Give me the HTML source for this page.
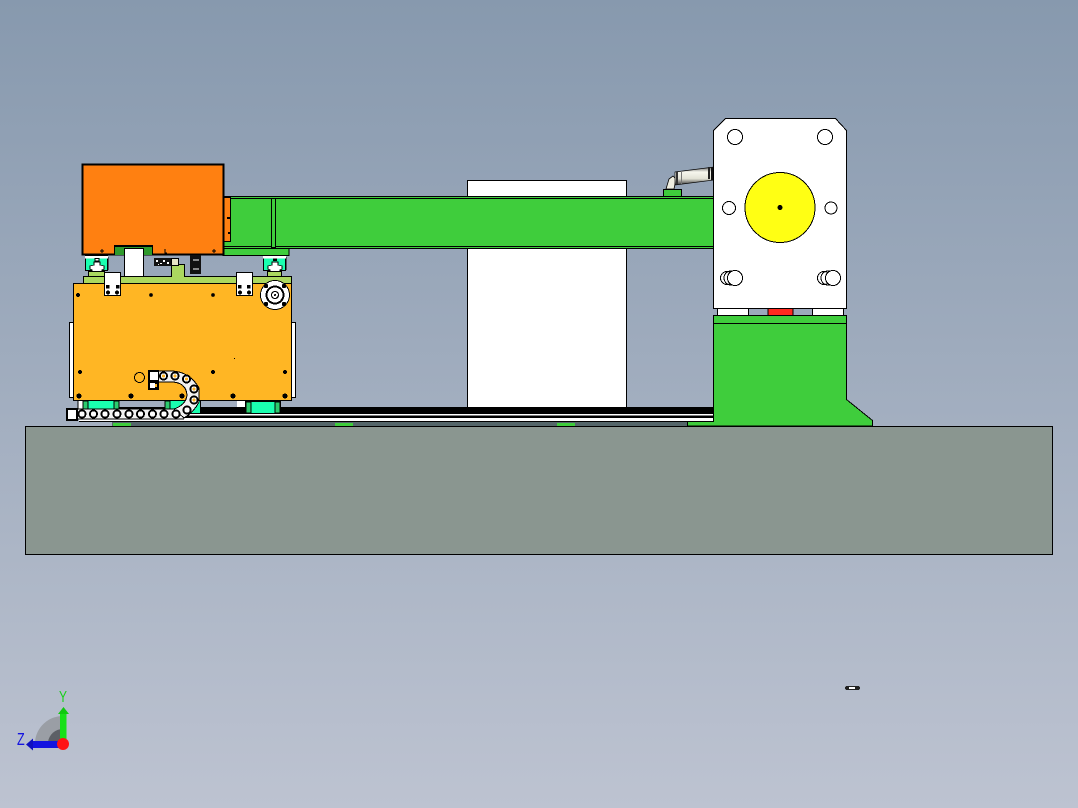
<!DOCTYPE html>
<html>
<head>
<meta charset="utf-8">
<style>
html,body{margin:0;padding:0;width:1078px;height:808px;overflow:hidden;background:linear-gradient(#8799ae,#bdc3d1);}
svg{display:block;position:absolute;left:0;top:0;}
text{font-family:"Liberation Sans",sans-serif;}
</style>
</head>
<body>
<svg width="1078" height="808" viewBox="0 0 1078 808" xmlns="http://www.w3.org/2000/svg" shape-rendering="crispEdges">
<!-- ground -->
<rect x="25.5" y="426.5" width="1027" height="128" fill="#8a9690" stroke="#000"/>
<!-- tower -->
<rect x="467.5" y="180.5" width="159" height="228" fill="#fff" stroke="#000"/>
<!-- rail -->
<rect x="80" y="407" width="634" height="7" fill="#000"/>
<rect x="80" y="414" width="634" height="1.5" fill="#fff"/>
<rect x="80" y="415.5" width="634" height="2.5" fill="#000"/>
<rect x="79" y="418" width="635" height="3.5" fill="#fff"/>
<rect x="79" y="421" width="635" height="1" fill="#000"/>
<rect x="112" y="422" width="600" height="4" fill="#55666a"/>
<rect x="113" y="423" width="18" height="3" fill="#3fcd3c"/>
<rect x="335" y="423" width="18" height="3" fill="#3fcd3c"/>
<rect x="557" y="423" width="18" height="3" fill="#3fcd3c"/>
<!-- beam -->
<rect x="223" y="196.5" width="491" height="52" fill="#3fcd3c" stroke="#000"/>
<rect x="223" y="198" width="491" height="1" fill="#000"/>
<rect x="223" y="246" width="491" height="1" fill="#000"/>
<rect x="271.5" y="198.5" width="4" height="49" fill="#3fcd3c" stroke="#000"/>
<rect x="223" y="248.5" width="66" height="7" fill="#3fcd3c" stroke="#000"/>
<rect x="223.5" y="197.5" width="7" height="44" fill="#ff8011" stroke="#000"/>
<rect x="227" y="217" width="3" height="2" fill="#000"/>
<rect x="228" y="232" width="3" height="2" fill="#000"/>
<!-- motor mount tab and cylinder -->
<rect x="663.5" y="189.5" width="18" height="7" fill="#3fcd3c" stroke="#000"/>
<defs>
<linearGradient id="cyl" x1="0" y1="0" x2="0" y2="1">
<stop offset="0" stop-color="#666"/><stop offset=".28" stop-color="#f6f6ee"/><stop offset=".65" stop-color="#e2e2d6"/><stop offset="1" stop-color="#333"/>
</linearGradient>
</defs>
<path d="M666 189l3-10 4-3 3 3-2 10z" fill="#efeee0" stroke="#000" stroke-width=".8" shape-rendering="auto"/>
<path d="M675 172l39-5v13l-39 5z" fill="url(#cyl)" stroke="#000" stroke-width=".7" shape-rendering="auto"/>
<rect x="708" y="167" width="2" height="12" fill="#222"/>
<rect x="711" y="167" width="3" height="13" fill="#111"/>
<rect x="676" y="172" width="2" height="12" fill="#333"/>
<rect x="681" y="171" width="1" height="13" fill="#777"/>
<!-- plate -->
<path d="M725.5 118.5H835.5L846.5 130.5V308.5H713.5V130.5Z" fill="#fff" stroke="#000"/>
<circle cx="735" cy="137" r="7.5" fill="none" stroke="#000"/>
<circle cx="825" cy="137" r="7.5" fill="none" stroke="#000"/>
<circle cx="729" cy="208" r="6.5" fill="none" stroke="#000"/>
<circle cx="831" cy="208" r="6" fill="none" stroke="#000"/>
<circle cx="727" cy="278" r="6.5" fill="none" stroke="#000"/>
<circle cx="731" cy="278" r="7" fill="none" stroke="#000"/>
<circle cx="735" cy="278" r="7.5" fill="#fff" stroke="#000"/>
<circle cx="824" cy="278" r="6.5" fill="none" stroke="#000"/>
<circle cx="828" cy="278" r="7" fill="none" stroke="#000"/>
<circle cx="833" cy="278" r="7.5" fill="#fff" stroke="#000"/>
<circle cx="780" cy="207.5" r="35" fill="#ffff14" stroke="#000"/>
<circle cx="780" cy="207.5" r="2.5" fill="#000"/>
<!-- under plate -->
<rect x="717.5" y="308.5" width="31" height="7" fill="#fff" stroke="#000"/>
<rect x="768" y="308.5" width="25" height="7" fill="#ff2a20" stroke="#000"/>
<rect x="812.5" y="308.5" width="31" height="7" fill="#fff" stroke="#000"/>
<!-- base -->
<path d="M713.5 315.5H846.5V399.5L872.5 420.5V426H687.5V421.5H713.5Z" fill="#3fcd3c" stroke="#000"/>
<rect x="714" y="323" width="133" height="1" fill="#000"/>
<!-- side rails -->
<rect x="69.5" y="322.5" width="4" height="75" fill="#fff" stroke="#000"/>
<rect x="291.5" y="322.5" width="4" height="75" fill="#fff" stroke="#000"/>
<!-- bearing blocks -->
<g>
<rect x="85.5" y="255.5" width="22" height="15" fill="#1affb0" stroke="#000"/>
<rect x="107" y="257" width="1.5" height="13" fill="#000"/>
<rect x="85" y="256" width="23" height="2.5" fill="#fff"/>
<path d="M90 266l4-1v-3h6v3l4 1v3l-2 1v2h-10v-2l-2-1z" fill="#fff" stroke="#000" stroke-width=".8"/>
<rect x="95" y="258.5" width="4" height="2.5" fill="#fff" stroke="#000" stroke-width=".6"/>
</g>
<g transform="translate(178,0)">
<rect x="85.5" y="255.5" width="22" height="15" fill="#1affb0" stroke="#000"/>
<rect x="107" y="257" width="1.5" height="13" fill="#000"/>
<rect x="85" y="256" width="23" height="2.5" fill="#fff"/>
<path d="M90 266l4-1v-3h6v3l4 1v3l-2 1v2h-10v-2l-2-1z" fill="#fff" stroke="#000" stroke-width=".8"/>
<rect x="95" y="258.5" width="4" height="2.5" fill="#000"/>
</g>
<!-- green plate -->
<path d="M83.5 276.5H171.5V264.5H184.5V276.5H291.5V283.5H83.5Z" fill="#abd85f" stroke="#000"/>
<rect x="88.5" y="271.5" width="16" height="5" fill="#abd85f" stroke="#000"/>
<rect x="267.5" y="271.5" width="14" height="5" fill="#abd85f" stroke="#000"/>
<!-- orange box -->
<rect x="82.5" y="164.5" width="141" height="90" fill="#ff8011" stroke="#000" stroke-width="2"/>
<path d="M114.5 255V246.5H152.5V255" fill="#2f9a2c" stroke="#000"/>
<rect x="114" y="245" width="39" height="2" fill="#000"/>
<path d="M100 251h4M102 249v4M165 249v4h2M212 251h4M214 249v4" stroke="#000" fill="none"/>
<!-- white block under box -->
<rect x="124.5" y="248.5" width="19" height="28" fill="#fff" stroke="#000"/>
<!-- connector -->
<rect x="154" y="258" width="17" height="8" fill="#111"/>
<path d="M156 260h2v2h-2zM160 263h2v1h-2zM163 260h2v2h-2zM167 262h2v2h-2zM158 264h1v1h-1z" fill="#fff"/>
<rect x="171.5" y="258.5" width="7" height="7" fill="#e6e5c4" stroke="#000"/>
<rect x="190" y="255" width="11" height="19" fill="#111"/>
<rect x="193" y="259" width="6" height="2" fill="#888"/>
<rect x="193" y="268" width="6" height="2" fill="#888"/>
<!-- gold -->
<path d="M73.5 283.5H291.5V400.5H73.5Z" fill="#ffb624" stroke="#000"/>
<g fill="#000">
<circle cx="78" cy="295" r="2"/><circle cx="151" cy="295" r="1.8"/><circle cx="213" cy="295" r="1.8"/>
<circle cx="80" cy="372" r="2"/><circle cx="213" cy="372" r="2"/><circle cx="285" cy="372" r="2"/>
<circle cx="79" cy="396" r="2.6"/><circle cx="131" cy="396" r="2.6"/><circle cx="182" cy="396" r="2.6"/><circle cx="233" cy="396" r="2.6"/><circle cx="285" cy="396" r="2.6"/>
<rect x="234" y="358" width="1" height="1"/>
</g>
<circle cx="139.5" cy="377.5" r="5" fill="none" stroke="#000"/>
<!-- white brackets -->
<rect x="104.5" y="272.5" width="16" height="23" fill="#fff" stroke="#000"/>
<rect x="236.5" y="272.5" width="16" height="23" fill="#fff" stroke="#000"/>
<g fill="#000">
<rect x="106" y="285" width="3.5" height="3.5"/><rect x="116" y="285" width="3.5" height="3.5"/><circle cx="108" cy="292.5" r="2"/><circle cx="117" cy="292.5" r="2"/>
<rect x="238" y="285" width="3.5" height="3.5"/><rect x="247" y="285" width="3.5" height="3.5"/><circle cx="240" cy="292.5" r="2"/><circle cx="249" cy="292.5" r="2"/>
</g>
<!-- motor disc -->
<circle cx="275" cy="295" r="14.5" fill="#fff" stroke="#000" stroke-width="1"/>
<circle cx="275" cy="295" r="8.5" fill="#fff" stroke="#000" stroke-width="2"/>
<circle cx="275" cy="295" r="3.5" fill="#fff" stroke="#000" stroke-width="1.2"/>
<circle cx="275" cy="295" r="1" fill="#000"/>
<g fill="#000"><circle cx="266" cy="286" r="2.2"/><circle cx="284" cy="286" r="2.2"/><circle cx="266" cy="304" r="2.2"/><circle cx="284" cy="304" r="2.2"/></g>
<!-- teal carriages -->
<rect x="83.5" y="400.5" width="35" height="9" fill="#1affb0" stroke="#000"/>
<rect x="83" y="401" width="5" height="8" fill="#2bcb6e" stroke="#000" stroke-width=".6"/>
<rect x="114" y="401" width="5" height="8" fill="#2bcb6e" stroke="#000" stroke-width=".6"/>
<rect x="165.5" y="400.5" width="35" height="13" fill="#1affb0" stroke="#000"/>
<rect x="165" y="401" width="5" height="9" fill="#2bcb6e" stroke="#000" stroke-width=".6"/>
<rect x="245.5" y="401.5" width="35" height="12" fill="#1affb0" stroke="#000"/>
<rect x="246" y="402" width="5" height="11" fill="#2bcb6e" stroke="#000" stroke-width=".6"/>
<rect x="275" y="402" width="5" height="11" fill="#2bcb6e" stroke="#000" stroke-width=".6"/>
<rect x="78" y="400.5" width="5" height="9" fill="#fff" stroke="#000" stroke-width=".6"/>
<rect x="237" y="401" width="8" height="6" fill="#fff"/>
<!-- chain -->
<rect x="66" y="408" width="12" height="13" fill="#000"/>
<rect x="68" y="410" width="8" height="9" fill="#fff"/>
<rect x="78" y="409" width="106" height="10" fill="#f2f2f2"/>
<rect x="78" y="408.5" width="106" height="1" fill="#000"/>
<rect x="78" y="418.5" width="106" height="1" fill="#000"/>
<path d="M158 371H172Q190 372 199 388V402Q194 412 184 418L174 409Q186 405 187 395Q186 382 171 382H158Z" fill="#f2f2f2" stroke="#000"/>
<rect x="148" y="370" width="11" height="20" fill="#000"/>
<rect x="150" y="372" width="8" height="8" fill="#fff"/>
<rect x="150" y="383" width="5" height="5" fill="#fff"/>
<rect x="155" y="384" width="2" height="3" fill="#ffb624"/>
<g fill="#fff" stroke="#000" stroke-width="1.8">
<circle cx="163.5" cy="376" r="3.6"/><circle cx="175" cy="376" r="3.6"/><circle cx="186.5" cy="379" r="3.6"/>
<circle cx="194" cy="389" r="3.6"/><circle cx="194" cy="400" r="3.6"/><circle cx="187" cy="410" r="3.6"/>
</g>
<g fill="#ffb624">
<circle cx="163.5" cy="376" r="1.6"/><circle cx="175" cy="376" r="1.6"/><circle cx="186.5" cy="379" r="1.6"/>
<circle cx="194" cy="389" r="1.6"/><circle cx="194" cy="400" r="1.6"/>
</g>
<g fill="#fff" stroke="#000" stroke-width="1.8">
<circle cx="82" cy="414" r="3.6"/><circle cx="93.5" cy="414" r="3.6"/><circle cx="105" cy="414" r="3.6"/><circle cx="117" cy="414" r="3.6"/><circle cx="129" cy="414" r="3.6"/><circle cx="140.5" cy="414" r="3.6"/><circle cx="152.5" cy="414" r="3.6"/><circle cx="164" cy="414" r="3.6"/><circle cx="176" cy="414" r="3.6"/>
</g>
<!-- small mark -->
<rect x="845" y="686" width="15" height="4" rx="2" fill="#222"/>
<rect x="849" y="687" width="6" height="2" fill="#fff"/>
<!-- triad -->
<g shape-rendering="auto">
<path d="M35 742A28 28 0 0 1 63 716V742Z" fill="#9a9ea5"/>
<path d="M48 742A15 15 0 0 1 63 729V742Z" fill="#5c5f66"/>
<rect x="60" y="713" width="6.5" height="27" fill="#18e018"/>
<path d="M58 714L63.5 707L69 714Z" fill="#10c810"/>
<rect x="32" y="741" width="28" height="7" fill="#1414e0"/>
<path d="M33 738.5L26 744.5L33 750.5Z" fill="#1010c0"/>
<circle cx="63" cy="744" r="6" fill="#ff1414"/>
<text transform="translate(59 702) scale(.75 1)" font-size="16" fill="#18d018">Y</text>
<text transform="translate(17 745) scale(.7 1)" font-size="18" fill="#1414e0">Z</text>
</g>
</svg>
</body>
</html>
